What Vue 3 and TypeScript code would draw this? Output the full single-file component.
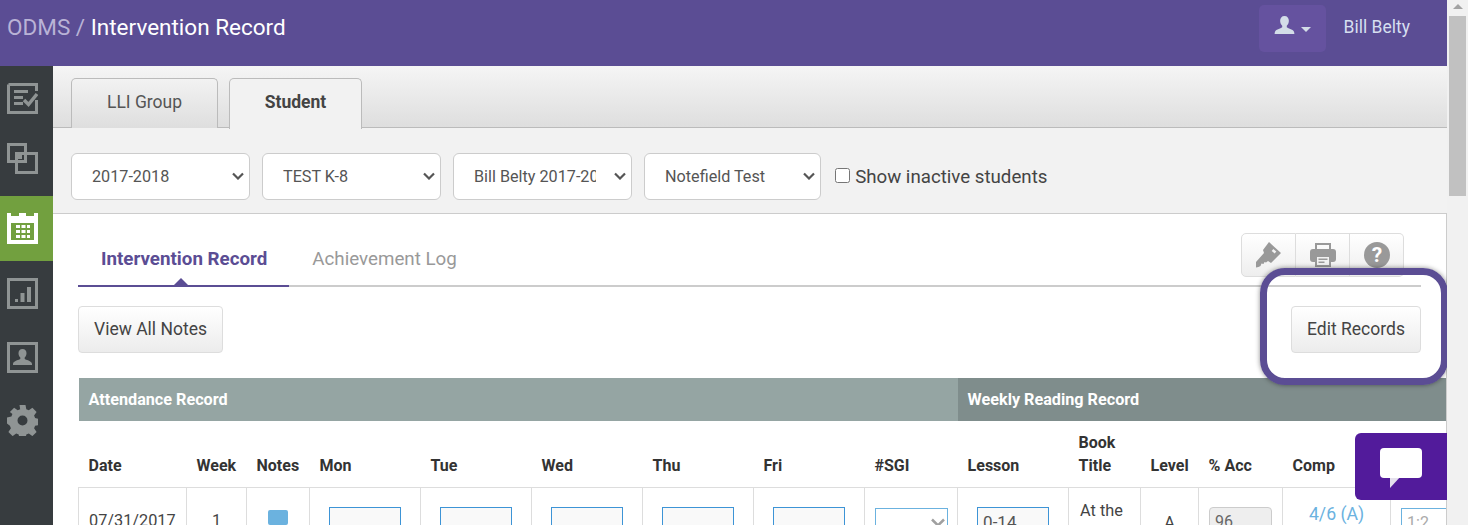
<template>
  <div class="page">
    <div class="app">
      <header class="topbar">
        <div class="crumbs"><span class="root">ODMS /</span> <span class="current">Intervention Record</span></div>
        <div class="user">
          <button class="user-btn">
            <svg width="21" height="19" viewBox="0 0 22 20"><path fill="#d3dde8" d="M11 0c3 0 4.600 2.200 4.600 5 0 2.300-1 4.200-2.200 5.300v1.500c.6 1 6.600 2 7.600 4.700.3.800.4 1.700.4 2.500H.6c0-.8.100-1.700.4-2.500 1-2.700 7-3.700 7.600-4.700v-1.500C7.400 9.200 6.400 7.300 6.400 5 6.400 2.200 8 0 11 0z"/></svg>
            <span class="caret"></span>
          </button>
          <span class="user-name">Bill Belty</span>
        </div>
      </header>

      <div class="body">
        <nav class="sidebar">
          <a class="side-item">
            <svg width="31" height="31" viewBox="0 0 31 31"><path fill="none" stroke="#8f9494" stroke-width="3" d="M1.500 1.500h28V8M29.500 17v12.500h-28v-28"/><path fill="#8f9494" d="M7 7h14v3H7zM7 13h9v3H7zM7 19h9v3H7z"/><path fill="none" stroke="#8f9494" stroke-width="3.500" d="M17 17l4.500 4.500L30 11"/></svg>
          </a>
          <a class="side-item up5">
            <svg width="31" height="31" viewBox="0 0 31 31"><path fill="none" stroke="#8f9494" stroke-width="3" d="M1.500 1.500h17v17h-17zM9.500 10.500h20v19h-20z"/><path fill="#8f9494" d="M11 12h4v4h-4z"/></svg>
          </a>
          <a class="side-item active">
            <svg width="31" height="31" viewBox="0 0 31 31"><path fill="#fff" fill-rule="evenodd" d="M0 0h4v3h8V0h7v3h8V0h4v31H0zM4 10v17h23V10z"/><path fill="#fff" d="M9 12h4v3H9zM14.500 12h4v3h-4zM20 12h3v3h-3zM9 17h4v3H9zM14.500 17h4v3h-4zM20 17h3v3h-3zM9 22h4v3H9zM14.500 22h4v3h-4zM20 22h3v3h-3z"/></svg>
          </a>
          <a class="side-item">
            <svg width="31" height="31" viewBox="0 0 31 31"><path fill="none" stroke="#8f9494" stroke-width="3" d="M1.500 1.500h28v28h-28z"/><path fill="#8f9494" d="M8 21h3v3H8zM13.500 15h4v9h-4zM20 9h4v15h-4z"/></svg>
          </a>
          <a class="side-item up1">
            <svg width="31" height="31" viewBox="0 0 31 31"><path fill="none" stroke="#8f9494" stroke-width="3" d="M1.500 1.500h28v28h-28z"/><path fill="#8f9494" d="M15.500 7c2.600 0 4 1.800 4 4.200 0 1.900-.8 3.300-1.800 4.300v1.500c.5.900 7.300 1.600 7.300 5v1H6v-1c0-3.400 6.800-4.100 7.300-5v-1.500c-1-1-1.800-2.400-1.800-4.300C11.500 8.800 12.900 7 15.500 7z"/></svg>
          </a>
          <a class="side-item up3">
            <svg width="31" height="31" viewBox="0 0 31 31"><path fill="#8f9494" fill-rule="evenodd" d="M12.500 0h6l.8 4.300 2.500 1 3.600-2.500 4.200 4.200-2.500 3.600 1 2.500 4.400.9v6l-4.400.8-1 2.500 2.500 3.600-4.200 4.200-3.600-2.500-2.500 1-.8 4.400h-6l-.8-4.400-2.500-1-3.600 2.500-4.200-4.200 2.500-3.600-1-2.500L0 18.500v-6l4.400-.9 1-2.500L2.900 7l4.200-4.200 3.600 2.500 2.500-1zM15.500 10.500a5 5 0 1 0 0 10 5 5 0 0 0 0-10z"/></svg>
          </a>
        </nav>

        <main class="main">
          <div class="tabs">
            <a class="tab">LLI Group</a>
            <a class="tab selected">Student</a>
          </div>
          <div class="filters">
            <div v-for="f in filters" :key="f.label" class="filter-wrap" :style="{ width: f.width + 'px' }">
              <select class="filter">
                <option>{{ f.label }}</option>
              </select>
              <svg class="chev" width="12" height="8" viewBox="0 0 12 8"><path fill="none" stroke="#555" stroke-width="2.200" d="M1 1.500l5 5 5-5"/></svg>
            </div>
            <label class="inactive"><input type="checkbox" /> Show inactive students</label>
          </div>

          <section class="panel">
            <div class="panel-head">
              <div class="subtabs">
                <a class="subtab on">Intervention Record</a>
                <a class="subtab">Achievement Log</a>
              </div>
              <div class="tools">
                <button class="tool">
                  <svg width="26" height="26" viewBox="0 0 26 26"><path fill="#999" fill-rule="evenodd" d="M13 0l12 11-10 10-3-2-2 1.500-1.500-.5-1 2-2-.5-1 2.500-2 1-2.500.5-.5-3.500.5-2L8 11 7 8z"/><path stroke="#f2f2f2" stroke-width="2.500" d="M16.500 8l3 2.500"/></svg>
                </button>
                <button class="tool">
                  <svg width="26" height="24" viewBox="0 0 26 24"><rect x="6" y="1" width="14" height="7" fill="none" stroke="#999" stroke-width="2"/><rect y="6" width="26" height="13" rx="3" fill="#999"/><rect x="6" y="13" width="14" height="10" fill="#f2f2f2" stroke="#999" stroke-width="2"/><path fill="#999" d="M8.500 15.500h9V17h-9zM8.500 18.500h6V20h-6z"/></svg>
                </button>
                <button class="tool">
                  <svg width="26" height="26" viewBox="0 0 26 26"><circle cx="13" cy="13" r="13" fill="#999"/><text x="13" y="20" text-anchor="middle" class="qmark">?</text></svg>
                </button>
              </div>
            </div>

            <div class="actions">
              <button class="btn">View All Notes</button>
              <button class="btn edit">Edit Records</button>
            </div>

            <div class="table-wrap">
              <table class="records">
                <colgroup>
                  <col v-for="(c, i) in columns" :key="i" :style="{ width: c.width + 'px' }" />
                </colgroup>
                <thead>
                  <tr class="bands">
                    <th colspan="9" class="band-a">Attendance Record</th>
                    <th colspan="6" class="band-b">Weekly Reading Record</th>
                  </tr>
                  <tr class="labels">
                    <th v-for="(c, i) in columns" :key="i">
                      <template v-for="(line, j) in c.label" :key="j">{{ line }}<br v-if="j < c.label.length - 1" /></template>
                    </th>
                  </tr>
                </thead>
                <tbody>
                  <tr>
                    <td class="txt">07/31/2017</td>
                    <td class="center txt">1</td>
                    <td class="center">
                      <svg class="note" width="20" height="20" viewBox="0 0 20 20"><path fill="#6bb2df" d="M2 0h16a2 2 0 0 1 2 2v11a2 2 0 0 1-2 2H10l-3 4v-4H2a2 2 0 0 1-2-2V2a2 2 0 0 1 2-2z"/></svg>
                    </td>
                    <td v-for="d in days" :key="d" class="center"><input class="day" /></td>
                    <td class="center">
                      <div class="sgi-wrap">
                        <select class="sgi"><option></option></select>
                        <svg class="sgi-chev" width="14" height="9" viewBox="0 0 14 9"><path fill="none" stroke="#a0a0a0" stroke-width="2.500" d="M1 1.500l6 6 6-6"/></svg>
                      </div>
                    </td>
                    <td class="center split"><input class="day lesson" value="0-14" /></td>
                    <td class="txt book">At the<br />Park</td>
                    <td class="center txt lvl">A</td>
                    <td class="center"><input class="acc" value="96" disabled /></td>
                    <td class="center comp">4/6 (A)</td>
                    <td><input class="ratio" placeholder="1:2" /></td>
                  </tr>
                </tbody>
              </table>
            </div>
          </section>
        </main>
      </div>

      <div class="callout"></div>
      <button class="chat">
        <svg width="42" height="40" viewBox="0 0 42 40"><path fill="#e4e0ec" d="M10 28v12l11-12z"/><rect width="42" height="30" rx="4" fill="#fff"/></svg>
      </button>
    </div>

    <div class="scrollbar">
      <span class="arrow"></span>
      <span class="thumb"></span>
    </div>
  </div>
</template>

<script setup lang="ts">
const filters = [
  { label: '2017-2018', width: 178.5 },
  { label: 'TEST K-8', width: 178.5 },
  { label: 'Bill Belty 2017-2018', width: 178.5 },
  { label: 'Notefield Test', width: 177 }
]

const columns: { label: string[]; width: number }[] = [
  { label: ['Date'], width: 108 },
  { label: ['Week'], width: 60 },
  { label: ['Notes'], width: 63 },
  { label: ['Mon'], width: 111 },
  { label: ['Tue'], width: 111 },
  { label: ['Wed'], width: 111 },
  { label: ['Thu'], width: 111 },
  { label: ['Fri'], width: 111 },
  { label: ['#SGI'], width: 93 },
  { label: ['Lesson'], width: 111 },
  { label: ['Book', 'Title'], width: 72 },
  { label: ['Level'], width: 58 },
  { label: ['% Acc'], width: 84 },
  { label: ['Comp'], width: 108 },
  { label: [''], width: 110 }
]

const days = ['mon', 'tue', 'wed', 'thu', 'fri']
</script>

<style>
html, body { margin: 0; height: 100%; overflow: hidden; background: #fff; }
</style>

<style scoped>
.page {
  display: flex;
  width: 1468px;
  height: 525px;
  overflow: hidden;
  font-family: Roboto, "Liberation Sans", sans-serif;
  color: #333;
}
.app {
  position: relative;
  width: 1447px;
  height: 525px;
  overflow: hidden;
  flex: none;
}

.topbar {
  height: 66px;
  background: #5b4d94;
  display: flex;
  justify-content: space-between;
  padding: 0 37px 0 7px;
  box-sizing: border-box;
}
.crumbs { font-size: 22.5px; line-height: 55px; }
.root { color: #b9b3d6; }
.current { color: #fff; }
.user { display: flex; align-items: flex-start; padding-top: 5px; }
.user-btn {
  width: 67px;
  height: 47px;
  background: #65529f;
  border: none;
  border-radius: 5px;
  display: flex;
  align-items: center;
  padding: 0 0 6px 15px;
  box-sizing: border-box;
  margin-right: 18px;
}
.caret {
  margin-left: 6px;
  margin-top: 8px;
  border-top: 5px solid #d3dde8;
  border-left: 5px solid transparent;
  border-right: 5px solid transparent;
}
.user-name { color: #d6dff0; font-size: 17.5px; line-height: 44px; }

.body { display: flex; height: 459px; }
.sidebar { width: 53px; flex: none; background: #373c3f; }
.side-item {
  height: 65px;
  display: flex;
  align-items: center;
  padding-left: 7px;
  box-sizing: border-box;
}
.side-item.active { background: #72a03f; }
.up5 { padding-bottom: 10px; }
.up3 { padding-bottom: 6px; }
.up1 { padding-bottom: 2px; }
.main { flex: 1; min-width: 0; background: #f2f2f2; }

.tabs {
  height: 62px;
  box-sizing: border-box;
  padding: 12px 0 0 18px;
  display: flex;
  gap: 11px;
  background: linear-gradient(#f5f5f5, #dedede);
  border-bottom: 1px solid #bbb;
}
.tab {
  width: 147px;
  box-sizing: border-box;
  height: 50px;
  border: 1px solid #bbb;
  border-bottom: none;
  border-radius: 5px 5px 0 0;
  background: linear-gradient(#f2f2f2, #dedede);
  font-size: 17.5px;
  line-height: 46px;
  text-align: center;
  color: #555;
}
.tab.selected {
  width: 133px;
  height: 51px;
  background: #f2f2f2;
  font-weight: 700;
  color: #444;
}

.filters {
  height: 85px;
  box-sizing: border-box;
  padding: 25px 0 0 18px;
  display: flex;
  gap: 12.5px;
  align-items: flex-start;
}
.filter-wrap { position: relative; height: 47px; }
.filter {
  appearance: none;
  width: 100%;
  height: 47px;
  box-sizing: border-box;
  padding: 0 35px 0 20px;
  font: 16.2px Roboto, sans-serif;
  color: #555;
  background: #fff;
  border: 1px solid #ccc;
  border-radius: 6px;
}
.chev { position: absolute; right: 6px; top: 19px; pointer-events: none; }
.inactive {
  font-size: 18.7px;
  line-height: 49px;
  color: #444;
  margin-left: 1px;
}
.inactive input { margin: 0 1px 0 0; width: 15px; height: 15px; }

.panel {
  height: 312px;
  background: #fff;
  border-top: 1px solid #ccc;
  border-right: 1px solid #ccc;
  box-sizing: border-box;
  overflow: hidden;
}
.panel-head {
  margin: 19px 25px 0 25px;
  height: 52px;
  border-bottom: 2px solid #ccc;
  display: flex;
  justify-content: space-between;
  align-items: flex-start;
}
.subtabs { display: flex; height: 52px; }
.subtab {
  padding: 0 22px 0 23px;
  font-size: 18.75px;
  line-height: 52px;
  color: #999;
  position: relative;
}
.subtab.on {
  color: #5b4d94;
  font-weight: 700;
  border-bottom: 2px solid #5b4d94;
  height: 52px;
}
.subtab.on::after {
  content: "";
  position: absolute;
  left: 96px;
  bottom: 0;
  border-bottom: 7px solid #5b4d94;
  border-left: 7px solid transparent;
  border-right: 7px solid transparent;
}
.tools { display: flex; margin-right: 17px; }
.tool {
  width: 54px;
  height: 44px;
  box-sizing: border-box;
  border: 1px solid #ddd;
  border-left: none;
  background: linear-gradient(#fff, #eee);
  padding: 0;
  display: flex;
  align-items: center;
  justify-content: center;
}
.tool:first-child { width: 55px; border-left: 1px solid #ddd; border-radius: 5px 0 0 5px; }
.tool:last-child { border-radius: 0 5px 5px 0; }
.qmark { font: 700 21px Roboto, sans-serif; fill: #fff; }

.actions {
  margin: 19px 25px 0 25px;
  display: flex;
  justify-content: space-between;
}
.btn {
  height: 47px;
  padding: 0 15px 2px;
  font: 17.5px Roboto, sans-serif;
  color: #444;
  border: 1px solid #ddd;
  border-radius: 4px;
  background: linear-gradient(#fff, #ececec);
}
.edit { width: 130px; padding: 0 0 2px; }

.table-wrap { margin: 25px 0 0 25px; overflow: hidden; }
.records {
  table-layout: fixed;
  border-collapse: collapse;
  width: 1423px;
  font-size: 16px;
}
.bands th {
  height: 43px;
  padding: 0 10px;
  text-align: left;
  color: #fff;
  font-size: 16.2px;
  font-weight: 700;
}
.band-a { background: #95a5a3; }
.band-b { background: #7f8d8c; }
.labels th {
  height: 66px;
  padding: 0 0 10px 10px;
  box-sizing: border-box;
  text-align: left;
  vertical-align: bottom;
  line-height: 23px;
  font-size: 16px;
  font-weight: 700;
  color: #333;
  border-bottom: 1px solid #ddd;
}
td {
  height: 60px;
  padding: 19px 0 0;
  vertical-align: top;
  border: 1px solid #ddd;
}
.center { text-align: center; }
.txt { font-size: 16.3px; color: #444; line-height: 24px; padding: 21px 0 0 10px; }
.center.txt { padding-left: 0; }
.center.lvl { padding-top: 23px; }
.txt.book { padding: 11px 0 0 11px; }
.split { border-left: 1px solid #7f8d8c; }
.note { margin-top: 3px; }
.day {
  width: 72px;
  height: 40px;
  box-sizing: border-box;
  border: 1px solid #3d94d6;
  background: #f9f9f9;
  padding: 0 5px 10px;
  font: 17px Roboto, sans-serif;
  color: #555;
}
.sgi-wrap { position: relative; width: 73px; margin: 1px auto 0; }
.sgi {
  appearance: none;
  display: block;
  width: 73px;
  height: 40px;
  border: 1px solid #6bb2df;
  background: #fff;
  color: #999;
  border-radius: 0;
}
.sgi-chev { position: absolute; right: 3px; top: 10px; pointer-events: none; }
.acc {
  width: 63px;
  height: 40px;
  box-sizing: border-box;
  border: 1px solid #ccc;
  border-radius: 4px;
  background: #eee;
  padding: 0 5px 10px;
  font: 16px Roboto, sans-serif;
  color: #666;
}
.comp { font-size: 17.7px; color: #6bb2df; padding-top: 16px; }
.ratio {
  margin: 1px 0 0 10px;
  width: 72px;
  height: 40px;
  box-sizing: border-box;
  border: 1px solid #6bb2df;
  padding: 0 5px 10px;
  font: 16px Roboto, sans-serif;
}
.ratio::placeholder { color: #aaa; }

/* outline round the Edit Records button */
.callout {
  position: absolute;
  left: 1260px;
  top: 268px;
  width: 188px;
  height: 117px;
  box-sizing: border-box;
  border: 7px solid #5b4d94;
  border-radius: 25px;
  box-shadow: 0 0 5px rgba(0, 0, 0, 0.45);
  pointer-events: none;
}
.chat {
  position: absolute;
  left: 1355px;
  top: 433px;
  width: 92px;
  height: 67px;
  border: none;
  background: #521b9b;
  border-radius: 6px 0 0 6px;
  display: flex;
  align-items: flex-start;
  justify-content: center;
  padding: 15px 0 0;
  box-sizing: border-box;
}

.scrollbar {
  position: relative;
  flex: 1;
  background: #f1f1f1;
}
.arrow {
  position: absolute;
  left: 6px;
  top: 4px;
  border-bottom: 5px solid #a3a3a3;
  border-left: 5px solid transparent;
  border-right: 5px solid transparent;
}
.thumb {
  position: absolute;
  left: 2px;
  right: 2px;
  top: 16px;
  height: 180px;
  background: #c1c1c1;
}
</style>
